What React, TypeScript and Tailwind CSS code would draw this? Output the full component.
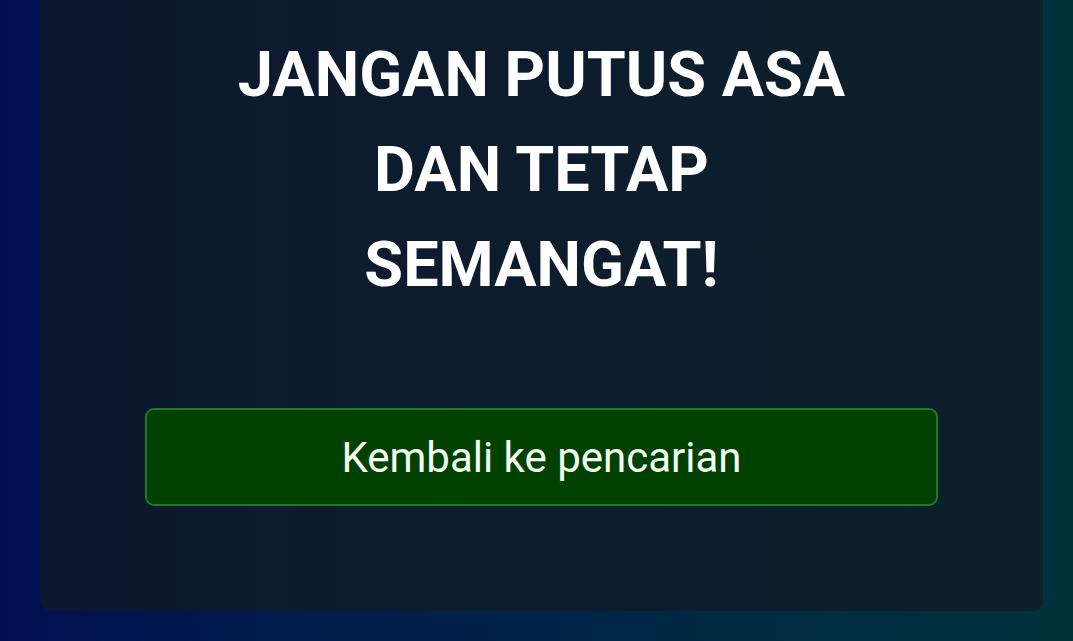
export default function App() {
  return (
    <div
      className="w-full h-[641px] overflow-hidden flex flex-col pl-[40px] pr-[30px] pb-[30px] bg-gradient-to-r from-[#000f52] to-[#00323b]"
      style={{ fontFamily: "Roboto, 'Liberation Sans', sans-serif" }}
    >
      <div className="flex-1 flex flex-col items-center justify-end rounded-b-[10px] bg-[#121a22]/70 pl-[105px] pr-[105px] pb-[105px]">
        <h1 className="w-[680px] text-center text-white font-bold text-[63px] leading-[95px] mb-[96px]">
          JANGAN PUTUS ASA DAN TETAP SEMANGAT!
        </h1>
        <button className="w-full h-[98px] rounded-[9px] border-2 border-[#1f7a27] bg-[#004100] text-[#f2fff2] text-[42px]">
          Kembali ke pencarian
        </button>
      </div>
    </div>
  );
}
